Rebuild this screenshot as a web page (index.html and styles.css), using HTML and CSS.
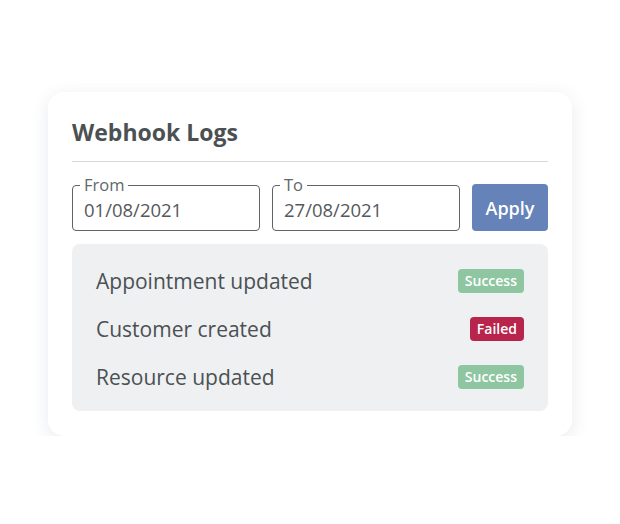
FILE: index.html
```html
<!DOCTYPE html>
<html lang="en">
<head>
    <meta charset="UTF-8">
    <meta name="viewport" content="width=device-width, initial-scale=1.0">
    <title>Webhook Logs</title>
    <link rel="stylesheet" href="styles.css">
</head>
<body>
    <div class="card">
        <h2 class="card-title">Webhook Logs</h2>
        <div class="filters">
            <div class="field">
                <span class="field-label">From</span>
                <span class="field-value">01/08/2021</span>
            </div>
            <div class="field">
                <span class="field-label">To</span>
                <span class="field-value">27/08/2021</span>
            </div>
            <button class="apply">Apply</button>
        </div>
        <ul class="logs">
            <li class="log"><span>Appointment updated</span><span class="badge success">Success</span></li>
            <li class="log"><span>Customer created</span><span class="badge failed">Failed</span></li>
            <li class="log"><span>Resource updated</span><span class="badge success">Success</span></li>
        </ul>
    </div>
</body>
</html>
```

FILE: styles.css
```css
body { margin: 0; background: #fff; font-family: "Open Sans", "Noto Sans", sans-serif; color: #4b5153; }
.card { width: 476px; margin: 92px 0 0 48px; padding: 24px 24px 25px; background: #fff; border-radius: 16px; box-shadow: 0 4px 18px rgba(60, 80, 120, 0.12); }
.card-title { margin: 0; padding: 2px 0 15px; font-size: 23px; line-height: 28px; font-weight: 700; border-bottom: 1px solid #d4d6d8; }
.filters { display: flex; gap: 12px; margin-top: 23px; height: 46px; }
.field { position: relative; flex: 1; border: 1px solid #5f6466; border-radius: 4px; display: flex; align-items: center; padding: 2px 11px 0; }
.field-label { position: absolute; left: 7px; top: -10px; padding: 0 4px; background: #fff; font-size: 16.5px; line-height: 18px; color: #62676a; }
.field-value { font-size: 18.5px; color: #55595c; }
.apply { width: 76px; border: none; border-radius: 4px; background: #6582b9; color: #fff; font-family: inherit; font-size: 18px; font-weight: 600; cursor: pointer; margin-top: -1px; height: 47px; }
.logs { list-style: none; margin: 13px 0 0; padding: 13px 24px 10px; background: #eef0f2; border-radius: 8px; }
.log { display: flex; justify-content: space-between; align-items: center; height: 48px; font-size: 21px; font-weight: 500; }
.badge { font-size: 14px; line-height: 24px; padding: 0 7px; border-radius: 4px; color: #fff; font-weight: 600; }
.success { background: #8dc6a1; }
.failed { background: #b8244b; }
```
